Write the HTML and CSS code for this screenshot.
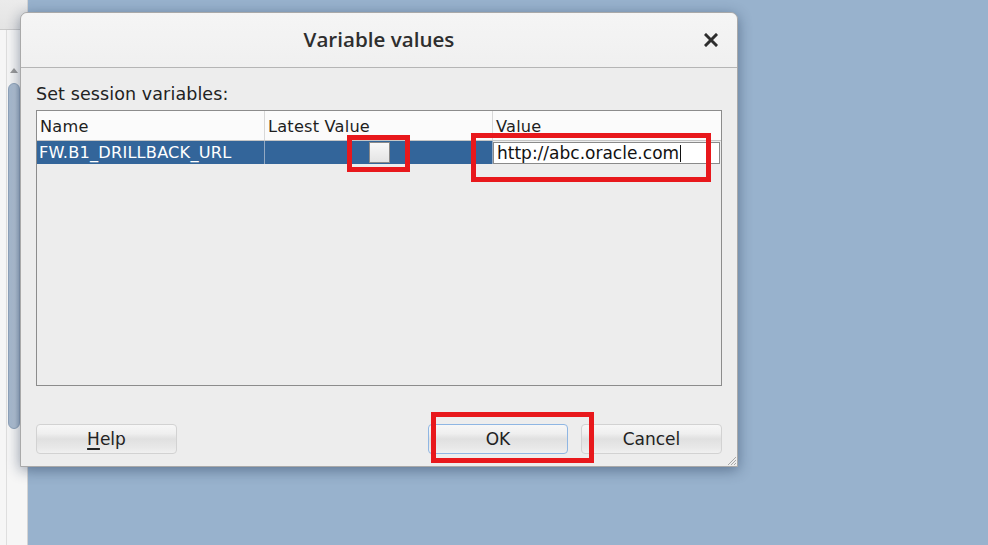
FILE: index.html
```html
<!DOCTYPE html>
<html>
<head>
<meta charset="utf-8">
<title>Variable values</title>
<link rel="stylesheet" href="styles.css">
</head>
<body>
<div class="screen">
  <div class="side">
    <div class="side-top"></div>
    <div class="side-body">
      <div class="side-line"></div>
      <div class="side-scroll">
        <div class="side-arrow"></div>
        <div class="side-thumb"></div>
      </div>
    </div>
  </div>
  <div class="desk"></div>

  <div class="dialog">
    <div class="titlebar">
      <span class="title">Variable values</span>
      <svg class="close" width="14" height="14" viewBox="0 0 14 14"><path d="M2 2 L12 12 M12 2 L2 12" stroke="#2e2e2e" stroke-width="3" stroke-linecap="square"/></svg>
    </div>
    <div class="content">
      <div class="label">Set session variables:</div>
      <div class="table">
        <div class="thead">
          <div class="th">Name</div>
          <div class="th">Latest Value</div>
          <div class="th last">Value</div>
        </div>
        <div class="row">
          <div class="td name">FW.B1_DRILLBACK_URL</div>
          <div class="td center"><span class="check"></span></div>
          <div class="td edit"><span class="field">http://abc.oracle.com<span class="caret"></span></span></div>
        </div>
      </div>
      <div class="buttons">
        <button class="btn"><u>H</u>elp</button>
        <span class="spacer"></span>
        <button class="btn focus">OK</button>
        <button class="btn">Cancel</button>
      </div>
    </div>
    <svg class="grip" width="12" height="12" viewBox="0 0 12 12"><path d="M11 3 L3 11 M11 6 L6 11 M11 9 L9 11" stroke="#a8a8a8" stroke-width="1"/></svg>
  </div>

  <div class="mark mark-check"></div>
  <div class="mark mark-value"></div>
  <div class="mark mark-ok"></div>
</div>
</body>
</html>
```
FILE: styles.css
```css
* { box-sizing: border-box; }
html, body { margin: 0; padding: 0; }
body {
  width: 988px;
  height: 545px;
  overflow: hidden;
  font-family: "DejaVu Sans", "Liberation Sans", sans-serif;
  color: #222;
}
.screen {
  position: relative;
  width: 988px;
  height: 545px;
  display: flex;
}
.side {
  width: 28px;
  display: flex;
  flex-direction: column;
  background: #f6f6f6;
  border-right: 1px solid #d4d4d4;
}
.side-top {
  height: 30px;
  background: linear-gradient(#ebebeb, #e4e4e4);
  border-bottom: 1px solid #c9c9c9;
}
.side-body {
  flex: 1;
  display: flex;
}
.side-line {
  width: 7px;
  border-right: 1px solid #dedede;
}
.side-scroll {
  width: 14px;
  display: flex;
  flex-direction: column;
  align-items: center;
}
.side-arrow {
  margin-top: 38px;
  width: 0;
  height: 0;
  border-left: 4px solid transparent;
  border-right: 4px solid transparent;
  border-bottom: 5px solid #9a9a9a;
}
.side-thumb {
  margin-top: 10px;
  width: 12px;
  height: 346px;
  border-radius: 6px;
  background: linear-gradient(90deg, #a4b6cb, #b4c3d5 60%, #a2b4c9);
  border: 1px solid #8ea2b9;
}
.desk {
  flex: 1;
  background: #98b2cd;
}

.dialog {
  position: absolute;
  left: 20px;
  top: 12px;
  width: 718px;
  height: 455px;
  background: #ededed;
  border: 1px solid #a9a9a9;
  border-radius: 7px 7px 0 0;
  box-shadow: 0 3px 14px rgba(20, 40, 70, 0.45);
  display: flex;
  flex-direction: column;
}
.titlebar {
  height: 55px;
  flex: none;
  background: linear-gradient(#f5f5f5, #f0f0f0);
  border-bottom: 1px solid #b5b5b5;
  border-radius: 7px 7px 0 0;
  display: flex;
  align-items: center;
  justify-content: center;
  position: relative;
}
.title {
  font-family: "Open Sans", "DejaVu Sans", sans-serif;
  font-weight: 600;
  font-size: 20.6px;
  color: #2e2e2e;
  margin-top: -3px;
}
.close {
  position: absolute;
  right: 19px;
  top: 20px;
}
.content {
  flex: 1;
  display: flex;
  flex-direction: column;
  padding: 16px 15px 11px 15px;
}
.label {
  font-size: 17.5px;
  line-height: 21px;
  height: 21px;
  color: #222;
  letter-spacing: 0.1px;
}
.table {
  margin-top: 5px;
  height: 276px;
  border: 1px solid #8c8c8c;
  background: #ededed;
  font-size: 16.2px;
  letter-spacing: 0.2px;
}
.thead {
  display: flex;
  height: 30px;
  background: #fbfbfb;
  border-bottom: 1px solid #c6c6c6;
}
.th {
  width: 228px;
  border-right: 1px solid #d8d8d8;
  padding: 4px 0 0 3px;
  line-height: 24px;
  color: #1e1e1e;
}
.th.last { flex: 1; border-right: none; }
.row {
  display: flex;
  height: 23px;
  background: #33659a;
}
.td {
  width: 228px;
  border-right: 1px solid #93a9c3;
  color: #fff;
  line-height: 23px;
  padding-left: 2px;
}
.td.center {
  display: flex;
  align-items: center;
  justify-content: center;
}
.check {
  width: 21px;
  height: 21px;
  border: 1px solid #8a8a8a;
  background: linear-gradient(#f8f8f8, #e4e4e4);
}
.td.edit {
  flex: 1;
  border-right: none;
  padding: 1px 1px 0 0;
  background: #ededed;
  letter-spacing: 0;
}
.field {
  display: block;
  height: 22px;
  background: #fff;
  border: 1px solid #8a8a8a;
  color: #111;
  font-size: 17px;
  line-height: 20px;
  padding-left: 3px;
  position: relative;
}
.caret {
  display: inline-block;
  width: 1px;
  height: 17px;
  background: #111;
  vertical-align: -3px;
  margin-left: 1px;
}
.buttons {
  margin-top: 38px;
  display: flex;
  gap: 13px;
}
.spacer { flex: 1; }
.btn {
  width: 141px;
  height: 30px;
  font-family: "DejaVu Sans", sans-serif;
  font-size: 17px;
  color: #222;
  border: 1px solid #d2d2d2;
  border-radius: 4px;
  background: linear-gradient(#f7f7f7 0%, #efefef 30%, #e0e0e0 50%, #e8e8e8 80%, #f0f0f0 100%);
  padding: 0 0 1px 0;
}
.btn.focus {
  width: 140px;
  border-color: #8fb6e3;
}
.btn u { text-decoration-thickness: 1.5px; text-underline-offset: 3px; }
.grip {
  position: absolute;
  right: 0;
  bottom: 0;
}
.mark {
  position: absolute;
  border: 5px solid #e8181c;
}
.mark-check { left: 347px; top: 135px; width: 63px; height: 37px; }
.mark-value { left: 471px; top: 133px; width: 240px; height: 49px; }
.mark-ok { left: 431px; top: 412px; width: 163px; height: 51px; }
```
